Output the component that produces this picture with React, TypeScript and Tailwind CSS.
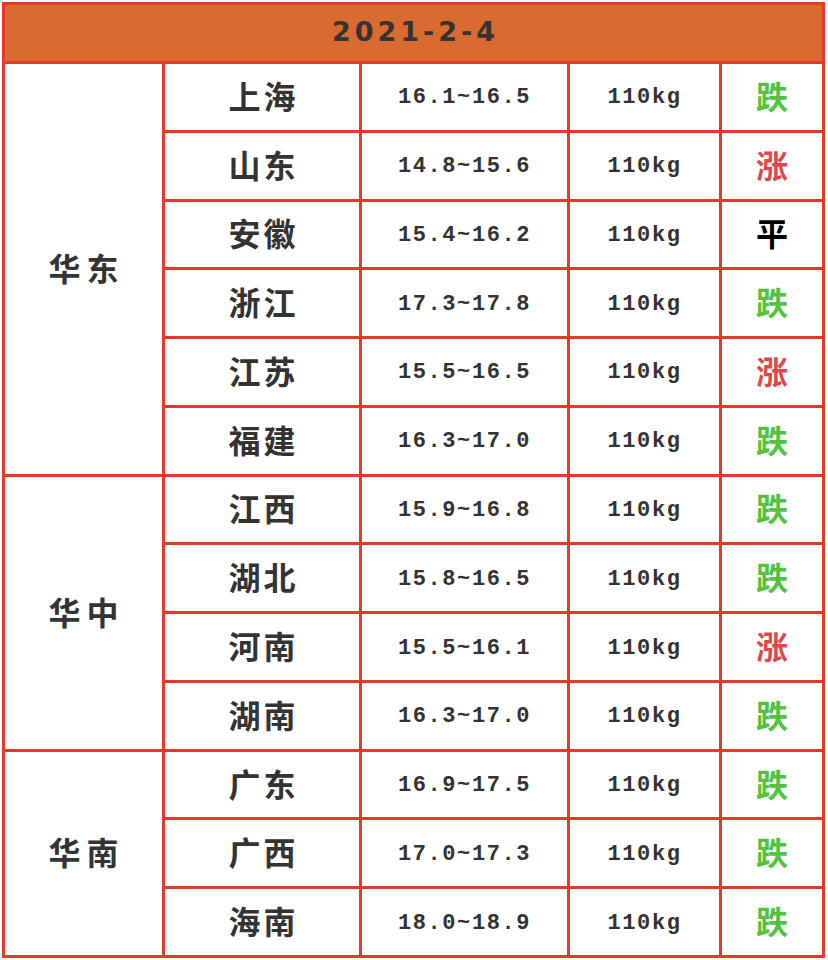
import React from "react";

type Row = { p: string; price: string; t: "跌" | "涨" | "平" };

const groups: { name: string; span: string; rows: Row[] }[] = [
  {
    name: "华东",
    span: "row-span-6",
    rows: [
      { p: "上海", price: "16.1~16.5", t: "跌" },
      { p: "山东", price: "14.8~15.6", t: "涨" },
      { p: "安徽", price: "15.4~16.2", t: "平" },
      { p: "浙江", price: "17.3~17.8", t: "跌" },
      { p: "江苏", price: "15.5~16.5", t: "涨" },
      { p: "福建", price: "16.3~17.0", t: "跌" },
    ],
  },
  {
    name: "华中",
    span: "row-span-4",
    rows: [
      { p: "江西", price: "15.9~16.8", t: "跌" },
      { p: "湖北", price: "15.8~16.5", t: "跌" },
      { p: "河南", price: "15.5~16.1", t: "涨" },
      { p: "湖南", price: "16.3~17.0", t: "跌" },
    ],
  },
  {
    name: "华南",
    span: "row-span-3",
    rows: [
      { p: "广东", price: "16.9~17.5", t: "跌" },
      { p: "广西", price: "17.0~17.3", t: "跌" },
      { p: "海南", price: "18.0~18.9", t: "跌" },
    ],
  },
];

function trendClass(t: string) {
  if (t === "跌") return "text-[#52c23f]";
  if (t === "涨") return "text-[#e0474c]";
  return "text-black";
}

export default function App() {
  return (
    <div className="w-[828px] h-[960px] bg-white pt-[2px] pl-[2px]">
      <div className="grid w-[823px] h-[956px] grid-cols-[157px_194px_205px_149px_100px] grid-rows-[56px_repeat(13,1fr)] gap-[3px] p-[3px] bg-[#e5392b]">
        <div className="col-span-5 bg-[#d96b30] flex items-center justify-center pb-[2px] pl-[4px] text-[27px] font-bold tracking-[4px] text-[#333333] font-['DejaVu_Sans','Noto_Sans',sans-serif]">
          2021-2-4
        </div>
        {groups.map((g) => (
          <React.Fragment key={g.name}>
            <div
              className={`${g.span} col-start-1 bg-white flex items-center justify-center pl-[6px] pb-[4px] text-[32px] font-semibold text-[#333333] tracking-[6px] font-['Noto_Sans_CJK_SC','Noto_Sans',sans-serif]`}
            >
              {g.name}
            </div>
            {g.rows.map((r) => (
              <React.Fragment key={r.p}>
                <div className="col-start-2 bg-white flex items-center justify-center pl-[3px] pb-[4px] text-[32px] font-semibold text-[#333333] tracking-[3px] font-['Noto_Sans_CJK_SC','Noto_Sans',sans-serif]">
                  {r.p}
                </div>
                <div className="bg-white flex items-center justify-center pt-[2px] text-[22px] font-bold text-[#333333] tracking-[1.6px] font-['Liberation_Mono','Courier_New',monospace]">
                  {r.price}
                </div>
                <div className="bg-white flex items-center justify-center pt-[2px] text-[22px] font-bold text-[#333333] tracking-[1.6px] font-['Liberation_Mono','Courier_New',monospace]">
                  110kg
                </div>
                <div
                  className={`bg-white flex items-center justify-center pb-[4px] text-[32px] font-semibold font-['Noto_Sans_CJK_SC','Noto_Sans',sans-serif] ${trendClass(r.t)}`}
                >
                  {r.t}
                </div>
              </React.Fragment>
            ))}
          </React.Fragment>
        ))}
      </div>
    </div>
  );
}
